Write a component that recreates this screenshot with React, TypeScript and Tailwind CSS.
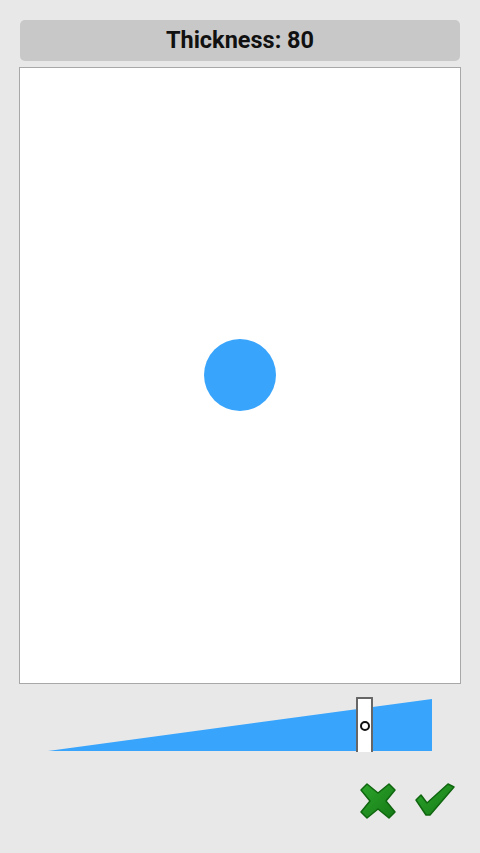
import React from "react";

export default function App() {
  return (
    <div className="w-[480px] h-[853px] bg-[#e8e8e8] flex flex-col px-[19px] pt-[20px]" style={{ fontFamily: "Roboto, 'Noto Sans', sans-serif" }}>
      <div className="mx-[1px] h-[41px] rounded-[5px] bg-[#c8c8c8] flex items-center justify-center">
        <span className="text-[23.5px] font-bold text-[#111] leading-none">Thickness: 80</span>
      </div>
      <div className="mt-[6px] h-[617px] bg-white border border-[#a8a8a8] flex items-center justify-center">
        <div className="w-[72px] h-[72px] rounded-full bg-[#38a4fc] mt-[-2px]" />
      </div>
      <div className="relative h-[70px] mt-[12px]">
        <svg className="absolute left-[29px] top-[3px]" width="385" height="53" viewBox="0 0 385 53">
          <polygon points="0,52 384,0 384,52" fill="#38a4fc" />
        </svg>
        <div className="absolute left-[337px] top-[1px] w-[17px] h-[55px] bg-white border-x-2 border-t-2 border-[#666] rounded-t-[1px] flex items-center justify-center">
          <div className="w-[10px] h-[10px] rounded-full border-2 border-[#111] bg-white" />
        </div>
      </div>
      <div className="flex justify-end items-start gap-[17px] pr-[5px] mt-[16px]">
        <svg width="38" height="38" viewBox="0 0 38 38">
          <defs>
            <linearGradient id="gx" x1="0" y1="0" x2="1" y2="1">
              <stop offset="0" stopColor="#2ca52c" />
              <stop offset="1" stopColor="#157a15" />
            </linearGradient>
          </defs>
          <path
            d="M2,8 L8,2 L19,11 L30,2 L36,8 L27,19 L36,30 L30,36 L19,27 L8,36 L2,30 L11,19 Z"
            fill="url(#gx)"
            stroke="#0f660f"
            strokeWidth="1.5"
            strokeLinejoin="round"
          />
        </svg>
        <svg width="42" height="36" viewBox="0 0 42 36">
          <defs>
            <linearGradient id="gc" x1="0" y1="0" x2="1" y2="1">
              <stop offset="0" stopColor="#2ca52c" />
              <stop offset="1" stopColor="#157a15" />
            </linearGradient>
          </defs>
          <path
            d="M2,18 L7,13 L13,21 L34,2 L40,5 L16,33 L12,33 Z"
            fill="url(#gc)"
            stroke="#0f660f"
            strokeWidth="1.5"
            strokeLinejoin="round"
          />
        </svg>
      </div>
    </div>
  );
}
